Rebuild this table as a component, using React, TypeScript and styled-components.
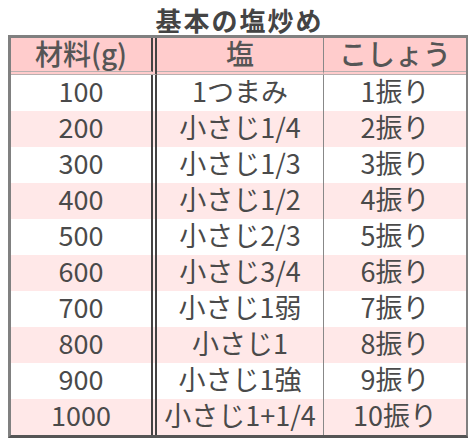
import styled, { createGlobalStyle } from "styled-components";

const GlobalStyle = createGlobalStyle`
  body {
    margin: 6px 8px 8px;
    background: #ffffff;
    font-family: "Noto Sans CJK JP", "Noto Sans", sans-serif;
    color: #444444;
  }
`;

const Table = styled.table`
  width: 461px;
  border-collapse: separate;
  border-spacing: 0;
  border: 3px solid #808080;
  border-bottom-color: #555555;
  table-layout: fixed;
`;

const Caption = styled.caption`
  font-size: 26px;
  font-weight: bold;
  letter-spacing: 2px;
  line-height: 27px;
  padding: 0 0 2px 2px;
  color: #444444;
  text-align: center;
`;

const sepBorder = (sep?: "double" | "single") =>
  sep === "double"
    ? "6px double #444444"
    : sep === "single"
    ? "1px solid #888888"
    : "none";

const Th = styled.th<{ $sep?: "double" | "single" }>`
  height: 30px;
  padding: 0 0 3px;
  background: #ffcccc;
  font-size: 28px;
  font-weight: 500;
  line-height: 30px;
  color: #555555;
  text-align: center;
  border-bottom: 4px double #b8b0b0;
  border-right: ${(p) => sepBorder(p.$sep)};
`;

const Row = styled.tr<{ $alt: boolean }>`
  background: ${(p) => (p.$alt ? "#ffe8e8" : "#ffffff")};
`;

const Td = styled.td<{ $sep?: "double" | "single" }>`
  height: 32px;
  padding: 0 0 4px;
  font-size: 27px;
  line-height: 32px;
  color: #4a4a4a;
  text-align: center;
  white-space: nowrap;
  border-right: ${(p) => sepBorder(p.$sep)};
`;

const rows = [
  ["100", "1つまみ", "1振り"],
  ["200", "小さじ1/4", "2振り"],
  ["300", "小さじ1/3", "3振り"],
  ["400", "小さじ1/2", "4振り"],
  ["500", "小さじ2/3", "5振り"],
  ["600", "小さじ3/4", "6振り"],
  ["700", "小さじ1弱", "7振り"],
  ["800", "小さじ1", "8振り"],
  ["900", "小さじ1強", "9振り"],
  ["1000", "小さじ1+1/4", "10振り"],
];

export default function App() {
  return (
    <>
      <GlobalStyle />
      <Table>
        <Caption>基本の塩炒め</Caption>
        <colgroup>
          <col style={{ width: 146 }} />
          <col style={{ width: 167 }} />
          <col />
        </colgroup>
        <thead>
          <tr>
            <Th $sep="double">材料(g)</Th>
            <Th $sep="single">塩</Th>
            <Th>こしょう</Th>
          </tr>
        </thead>
        <tbody>
          {rows.map((r, i) => (
            <Row key={r[0]} $alt={i % 2 === 1}>
              <Td $sep="double">{r[0]}</Td>
              <Td $sep="single">{r[1]}</Td>
              <Td>{r[2]}</Td>
            </Row>
          ))}
        </tbody>
      </Table>
    </>
  );
}
